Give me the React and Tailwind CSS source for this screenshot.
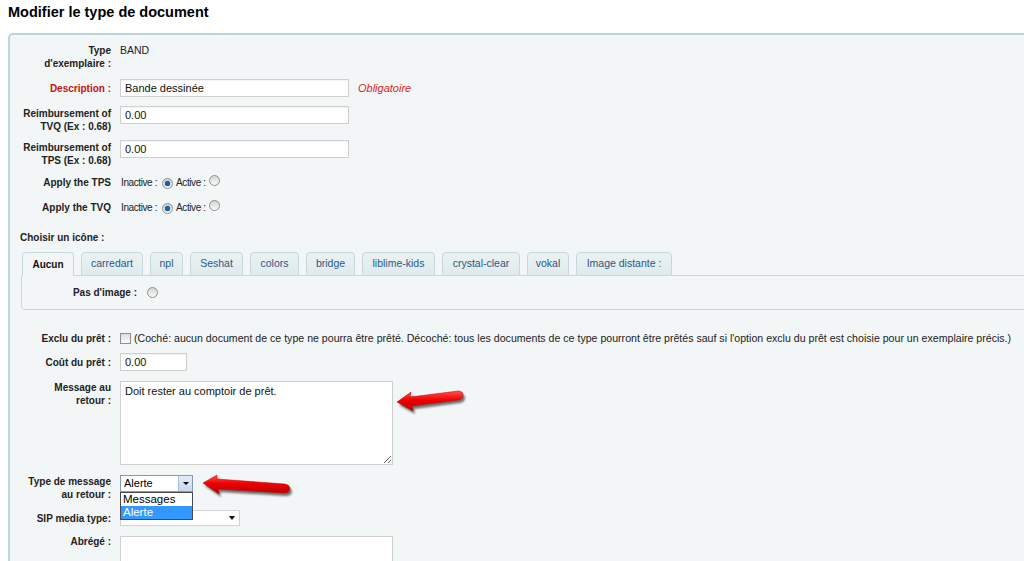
import React from "react";

function Radio({ checked }) {
  return (
    <span className="inline-flex w-[11px] h-[11px] shrink-0 rounded-full border border-[#8e8e8e] bg-linear-to-b from-[#d4d4d4] to-[#fafafa] items-center justify-center">
      {checked && <span className="w-[5px] h-[5px] rounded-full bg-[#1d5ea8] shadow-[0_0_1px_#0b3a70]" />}
    </span>
  );
}

function Row({ mt, label, labelClass = "", center = false, children }) {
  return (
    <div className={`flex ${mt} ${center ? "items-center" : "items-start"}`}>
      <div className={`w-[93px] ml-[8px] mr-[9px] shrink-0 text-right font-bold text-[10px] leading-[13px] ${labelClass}`}>
        {label}
      </div>
      <div className="flex items-center">{children}</div>
    </div>
  );
}

function TextInput({ w, value }) {
  return (
    <input
      readOnly
      value={value}
      className={`${w} h-[18px] border border-[#cfcfcf] bg-white px-[4px] text-[11px] text-[#111] outline-none shadow-[inset_0_1px_1px_rgba(0,0,0,0.05)]`}
    />
  );
}

function RadioPair() {
  return (
    <div className="flex items-center text-[10px] tracking-[-0.4px] leading-[13px] text-[#222]">
      <span className="ml-[1px]">Inactive :</span>
      <span className="ml-[5px]"><Radio checked /></span>
      <span className="ml-[3px]">Active :</span>
      <span className="ml-[3px]"><Radio /></span>
    </div>
  );
}

const tabs = [
  ["Aucun", "w-[52px]"],
  ["carredart", "w-[62px]"],
  ["npl", "w-[33px]"],
  ["Seshat", "w-[53px]"],
  ["colors", "w-[49px]"],
  ["bridge", "w-[49px]"],
  ["liblime-kids", "w-[73px]"],
  ["crystal-clear", "w-[78px]"],
  ["vokal", "w-[42px]"],
  ["Image distante :", "w-[96px]"],
];

function Arrows() {
  const a1 =
    "M397,402 L411,392 L410,397 L458,391 Q463,391 463,395 Q463,399 458,400 L412,406 L413,411 Z";
  const a2 =
    "M203,483 L217,475 L217,479 L285,484 Q290,485 290,489 Q289,493 284,493 L218,489 L219,494 Z";
  return (
    <svg className="absolute left-0 top-0 pointer-events-none" width="1024" height="561" viewBox="0 0 1024 561">
      <defs>
        <linearGradient id="rg" x1="0" y1="0" x2="0" y2="1">
          <stop offset="0" stopColor="#ff5050" />
          <stop offset="0.45" stopColor="#f00000" />
          <stop offset="1" stopColor="#b40000" />
        </linearGradient>
        <filter id="sh" x="-20%" y="-40%" width="140%" height="180%">
          <feGaussianBlur stdDeviation="1.3" />
        </filter>
      </defs>
      <g fill="#000" opacity="0.55" filter="url(#sh)" transform="translate(2,3)">
        <path d={a1} />
        <path d={a2} />
      </g>
      <path d={a1} fill="url(#rg)" stroke="#c00000" strokeWidth="0.5" />
      <path d={a2} fill="url(#rg)" stroke="#c00000" strokeWidth="0.5" />
    </svg>
  );
}

export default function App() {
  return (
    <div className="relative w-[1024px] h-[561px] overflow-hidden bg-white font-['Liberation_Sans',Arial,sans-serif] text-[#222]">
      <div className="px-[8px] pt-[3px] text-[14.5px] leading-[18px] font-bold text-black">
        Modifier le type de document
      </div>

      <div className="ml-[8px] mt-[12px] w-[1040px] h-[600px] rounded-[5px] border-2 border-[#bcd7da] bg-[#f3f6f7]">
        <Row mt="mt-[9px]" label={<>Type<br />d'exemplaire :</>}>
          <span className="text-[10.5px] leading-[13px]">BAND</span>
        </Row>

        <Row mt="mt-[9px]" center label="Description :" labelClass="text-[#cc1111]">
          <TextInput w="w-[229px]" value="Bande dessinée" />
          <span className="ml-[9px] text-[11px] italic text-[#dd1f1f]">Obligatoire</span>
        </Row>

        <Row mt="mt-[9px]" label={<span className="relative top-[1px]">Reimbursement of<br />TVQ (Ex : 0.68)</span>}>
          <TextInput w="w-[229px]" value="0.00" />
        </Row>

        <Row mt="mt-[8px]" label={<span className="relative top-[1px]">Reimbursement of<br />TPS (Ex : 0.68)</span>}>
          <TextInput w="w-[229px]" value="0.00" />
        </Row>

        <Row mt="mt-[9px]" center label="Apply the TPS">
          <RadioPair />
        </Row>

        <Row mt="mt-[11px]" center label="Apply the TVQ">
          <RadioPair />
        </Row>

        <div className="mt-[17px] ml-[10px] text-[10px] leading-[13px] font-bold">Choisir un icône :</div>

        <div className="relative z-10 mt-[8px] ml-[12px] flex gap-[7px]">
          {tabs.map(([t, w], i) => (
            <div
              key={t}
              className={`${w} h-[24px] flex items-center justify-center rounded-t-[4px] border border-[#c5d9dc] whitespace-nowrap ${
                i === 0
                  ? "bg-[#f3f6f7] border-b-[#f3f6f7] font-bold text-[#111] text-[10px]"
                  : "bg-linear-to-b from-[#eaf2f3] to-[#e0eaec] text-[#2d5884] text-[10.5px]"
              }`}
            >
              {t}
            </div>
          ))}
        </div>
        <div className="-mt-px ml-[11px] mr-[10px] h-[35px] rounded-[4px] rounded-tl-none border border-[#c5d9dc] bg-[#f3f6f7] flex items-center">
          <div className="w-[93px] ml-[22px] mr-[10px] text-right font-bold text-[10px] leading-[13px]">Pas d'image :</div>
          <Radio />
        </div>

        <div className="mt-[22px] flex items-center">
          <div className="w-[93px] ml-[8px] mr-[9px] shrink-0 text-right font-bold text-[10px] leading-[13px]">Exclu du prêt :</div>
          <span className="w-[11px] h-[11px] border border-[#8e8e8e] bg-linear-to-b from-[#dcdcdc] to-[#fafafa] shrink-0" />
          <span className="ml-[3px] text-[10.6px] leading-[13px] whitespace-nowrap">
            (Coché: aucun document de ce type ne pourra être prêté. Décoché: tous les documents de ce type pourront être prêtés sauf si l'option exclu du prêt est choisie pour un exemplaire précis.)
          </span>
        </div>

        <Row mt="mt-[8px]" center label="Coût du prêt :">
          <TextInput w="w-[67px]" value="0.00" />
        </Row>

        <Row mt="mt-[10px]" label={<>Message au<br />retour :</>}>
          <textarea
            readOnly
            defaultValue="Doit rester au comptoir de prêt."
            className="w-[273px] h-[84px] border border-[#cfcfcf] bg-white px-[4px] py-[2px] text-[11px] leading-[14px] text-[#111] outline-none"
          />
        </Row>

        <Row mt="mt-[10px]" label={<>Type de message<br />au retour :</>}>
          <div className="relative">
            <div className="w-[73px] h-[17px] border border-[#7f9db9] bg-white flex items-stretch">
              <span className="flex-1 pl-[3px] text-[11px] leading-[15px] text-black">Alerte</span>
              <span className="w-[14px] border-l border-[#a7bfdc] bg-linear-to-b from-[#e3ecf8] to-[#c6d8ef] flex items-center justify-center">
                <span className="w-0 h-0 border-l-[3px] border-r-[3px] border-t-[3px] border-l-transparent border-r-transparent border-t-black" />
              </span>
            </div>
            <div className="absolute left-0 top-[17px] z-20 w-[73px] border border-[#4a4a4a] bg-white text-[11.5px] leading-[13px]">
              <div className="pl-[2px] text-black">Messages</div>
              <div className="pl-[2px] bg-[#3399ff] text-white">Alerte</div>
            </div>
          </div>
        </Row>

        <Row mt="mt-[9px]" center label="SIP media type:">
          <div className="w-[120px] h-[16px] border border-[#d2d2d2] bg-white flex items-center justify-end pr-[4px]">
            <span className="w-0 h-0 border-l-[3px] border-r-[3px] border-t-[4px] border-l-transparent border-r-transparent border-t-black" />
          </div>
        </Row>

        <Row mt="mt-[10px]" label={<span className="relative top-[-1px]">Abrégé :</span>}>
          <div className="w-[273px] h-[60px] border border-[#cfcfcf] bg-white" />
        </Row>
      </div>

      <Arrows />
    </div>
  );
}
